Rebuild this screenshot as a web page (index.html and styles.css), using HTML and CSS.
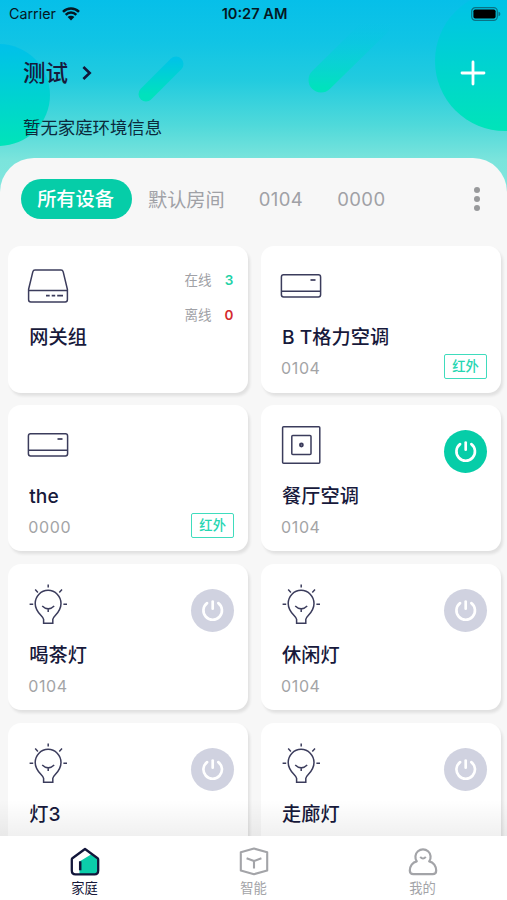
FILE: index.html
```
<!DOCTYPE html>
<html lang="zh-CN">
<head>
  <meta charset="UTF-8" />
  <meta name="viewport" content="width=device-width, initial-scale=1.0">
  <title>家庭</title>
  <link rel="stylesheet" href="styles.css">
</head>
<body>

<!-- icons -->
<svg class="sprite" width="0" height="0">
  <symbol id="i-gateway" viewBox="0 0 42 42">
    <path d="M1.6 23.3 L5.8 5.9 Q6.3 4.1 8 4.1 H34 Q35.7 4.1 36.2 5.9 L40.4 23.3 V33.8 Q40.4 36 38.2 36 H3.8 Q1.6 36 1.6 33.8 Z M1.6 24.4 H40.4" />
    <path d="M19 29.6 H22.7 M24.7 29.6 H28.2 M30.2 29.6 H36" stroke-width="1.7" />
  </symbol>
  <symbol id="i-ac" viewBox="0 0 42 42">
    <rect x="1.4" y="8.8" width="39.2" height="22.2" rx="2.2" />
    <path d="M1.6 25.2 H40.4" />
    <path d="M30.5 14 H35.5" stroke-width="1.7" />
  </symbol>
  <symbol id="i-panel" viewBox="0 0 42 42">
    <rect x="2.6" y="1.8" width="37.2" height="36.4" rx="1" />
    <rect x="11.8" y="10.6" width="19.2" height="19" rx="1" />
    <circle cx="21.4" cy="20" r="1.4" stroke-width="2" />
  </symbol>
  <symbol id="i-bulb" viewBox="0 0 42 42">
    <path d="M16.6 39.2 V35.3 C16 31.8 8.2 28.6 8.2 19.5 A12.9 13.2 0 0 1 34 19.5 C34 28.6 26.4 31.8 25.8 35.3 V39.2 Z" />
    <path d="M15.2 22 Q21.2 27.8 27.2 22 M21.2 25 V28" />
    <path d="M21.2 0.6 V3.6 M8.2 5.6 L10.9 8.4 M35 5.6 L32.3 8.4 M2.6 20.3 H6.2 M36.4 20.3 H40" />
  </symbol>
  <symbol id="i-power" viewBox="0 0 44 44">
    <path d="M16.3 14.3 A9.4 9.4 0 1 0 27.7 14.3" />
    <path d="M22 12.7 V20" />
  </symbol>
</svg>

<div class="screen">
  <div class="hero">
    <svg class="hero-bg" viewBox="0 0 507 215" preserveAspectRatio="none">
      <defs>
        <linearGradient id="g1" x1="0" y1="0" x2="0" y2="1">
          <stop offset="0" stop-color="#00c0ea" />
          <stop offset="1" stop-color="#00e4b9" />
        </linearGradient>
        <linearGradient id="g2" gradientUnits="userSpaceOnUse" x1="0" y1="60" x2="0" y2="95">
          <stop offset="0" stop-color="#00c4e6" />
          <stop offset="1" stop-color="#00e2bd" />
        </linearGradient>
        <linearGradient id="g3" gradientUnits="userSpaceOnUse" x1="0" y1="20" x2="0" y2="88">
          <stop offset="0" stop-color="#00c4e6" stop-opacity="0" />
          <stop offset="1" stop-color="#00e2bd" />
        </linearGradient>
      </defs>
      <circle cx="-1" cy="95" r="51" fill="url(#g1)" />
      <circle cx="505" cy="61" r="70" fill="url(#g1)" />
      <path d="M146 94 L176 64" stroke="url(#g2)" stroke-width="15" stroke-linecap="round" />
      <path d="M321 80 L378 24" stroke="url(#g3)" stroke-width="25" stroke-linecap="round" />
    </svg>

    <div class="statusbar">
      <div class="carrier">
        <span>Carrier</span>
        <svg width="18" height="14" viewBox="0 0 18 14">
          <path d="M1 4.9 A11.4 11.4 0 0 1 17 4.9 M3.7 7.8 A7.4 7.4 0 0 1 14.3 7.8" fill="none" stroke="#051722" stroke-width="2.5" />
          <path d="M9 13.6 L5.6 10.1 A4.8 4.8 0 0 1 12.4 10.1 Z" fill="#051722" />
        </svg>
      </div>
      <div class="clock">10:27 AM</div>
      <div class="battery">
        <svg width="30" height="14" viewBox="0 0 30 14">
          <rect x="0.7" y="0.7" width="25.6" height="12.6" rx="3.6" fill="none" stroke="#0a7285" stroke-width="1.2" />
          <rect x="2.4" y="2.4" width="22.2" height="9.2" rx="1.8" fill="#000" />
          <path d="M27.5 4.7 Q29.4 5.3 29.4 7 Q29.4 8.7 27.5 9.3 Z" fill="#0a7285" />
        </svg>
      </div>
    </div>

    <div class="home-row">
      <div class="home-name">测试
        <svg width="12" height="16" viewBox="0 0 12 16"><path d="M2.4 2 L8.7 8 L2.4 14" /></svg>
      </div>
      <svg class="add" width="26" height="26" viewBox="0 0 26 26"><path d="M13 2 V24 M2 13 H24" stroke-linecap="round" /></svg>
    </div>
    <div class="env">暂无家庭环境信息</div>
  </div>

  <div class="sheet">
    <div class="rooms">
      <span class="room active">所有设备</span>
      <span class="room">默认房间</span>
      <span class="room num">0104</span>
      <span class="room num">0000</span>
      <div class="more"><i></i><i></i><i></i></div>
    </div>

    <div class="devices">
      <div class="card">
        <div class="info">
          <svg class="icon"><use href="#i-gateway" /></svg>
          <div class="name">网关组</div>
        </div>
        <div class="counts">
          <div>在线<b class="online">3</b></div>
          <div>离线<b class="offline">0</b></div>
        </div>
      </div>

      <div class="card">
        <div class="info">
          <svg class="icon"><use href="#i-ac" /></svg>
          <div class="name">B T格力空调</div>
          <div class="place">0104</div>
        </div>
        <span class="tag">红外</span>
      </div>

      <div class="card">
        <div class="info">
          <svg class="icon"><use href="#i-ac" /></svg>
          <div class="name">the</div>
          <div class="place">0000</div>
        </div>
        <span class="tag">红外</span>
      </div>

      <div class="card">
        <div class="info">
          <svg class="icon"><use href="#i-panel" /></svg>
          <div class="name">餐厅空调</div>
          <div class="place">0104</div>
        </div>
        <svg class="power on"><use href="#i-power" /></svg>
      </div>

      <div class="card">
        <div class="info">
          <svg class="icon"><use href="#i-bulb" /></svg>
          <div class="name">喝茶灯</div>
          <div class="place">0104</div>
        </div>
        <svg class="power"><use href="#i-power" /></svg>
      </div>

      <div class="card">
        <div class="info">
          <svg class="icon"><use href="#i-bulb" /></svg>
          <div class="name">休闲灯</div>
          <div class="place">0104</div>
        </div>
        <svg class="power"><use href="#i-power" /></svg>
      </div>

      <div class="card">
        <div class="info">
          <svg class="icon"><use href="#i-bulb" /></svg>
          <div class="name">灯3</div>
        </div>
        <svg class="power"><use href="#i-power" /></svg>
      </div>

      <div class="card">
        <div class="info">
          <svg class="icon"><use href="#i-bulb" /></svg>
          <div class="name">走廊灯</div>
        </div>
        <svg class="power"><use href="#i-power" /></svg>
      </div>
    </div>
  </div>

  <div class="tabbar">
    <div class="tab active">
      <svg width="32" height="32" viewBox="0 0 32 32">
        <path d="M10.5 27.5 V15.5 L22 8.5 L28.5 13 V24 Q28.5 28 25 28 H10.5 Z" fill="#0bcdaa" />
        <path d="M16 3 L28.6 12.2 Q29.2 12.7 29.2 13.5 V24.4 Q29.2 28.3 25.5 28.3 H6.5 Q2.8 28.3 2.8 24.4 V13.5 Q2.8 12.7 3.4 12.2 Z" fill="none" stroke="#12163a" stroke-width="2.3" stroke-linejoin="round" />
        <path d="M11.2 15.3 V24.3" stroke="#12163a" stroke-width="2.5" />
      </svg>
      <span>家庭</span>
    </div>
    <div class="tab">
      <svg width="32" height="32" viewBox="0 0 32 32" fill="none" stroke="#a3a4a8" stroke-width="2.1" stroke-linejoin="round">
        <path d="M16 2.6 L29.2 6.2 V24.6 L16 28.2 L2.8 24.6 V6.2 Z" />
        <path d="M8.6 12.3 L16 15 L23.4 12.3 M16 15 V22.4" />
      </svg>
      <span>智能</span>
    </div>
    <div class="tab">
      <svg width="32" height="32" viewBox="0 0 32 32" fill="none" stroke="#a3a4a8" stroke-width="2.2" stroke-linejoin="round">
        <path d="M9.8 15.3 A7.6 7.6 0 1 1 22.2 15.3 C26.5 16.2 29.2 20.4 29.2 24.6 Q29.2 28.2 25.7 28.2 H6.3 Q2.8 28.2 2.8 24.6 C2.8 20.4 5.5 16.2 9.8 15.3 Z" />
        <path d="M13.2 10.8 Q16 14.2 18.8 10.8" stroke-width="2" />
      </svg>
      <span>我的</span>
    </div>
  </div>
</div>

</body>
</html>
```
FILE: styles.css
```
* {
  box-sizing: border-box;
}
body {
  margin: 0;
  font-family: Inter, "Noto Sans CJK SC", sans-serif;
  color: #17193b;
}
.sprite {
  display: block;
  position: absolute;
}
.screen {
  height: 900px;
  display: flex;
  flex-direction: column;
  overflow: hidden;
  background: linear-gradient(#06bfe9 0, #10c4e5 40px, #22cbdf 80px, #4fd9da 125px, #7be4dc 160px, #86e7e0 215px);
}

/* header */
.hero {
  position: relative;
  height: 158px;
  flex: none;
}
.hero-bg {
  position: absolute;
  top: 0;
  left: 0;
  width: 100%;
  height: 215px;
  fill: none;
}
.statusbar,
.home-row,
.env {
  position: relative;
}
.statusbar {
  height: 27px;
  display: grid;
  grid-template-columns: 1fr auto 1fr;
  align-items: center;
  padding: 0 6px 0 9px;
  color: #051722;
}
.carrier {
  display: flex;
  align-items: center;
  gap: 6px;
  font-size: 14.3px;
}
.clock {
  margin-right: 1px;
  font-weight: 600;
  font-size: 14.6px;
}
.battery {
  display: flex;
  justify-content: flex-end;
}
.home-row {
  display: flex;
  justify-content: space-between;
  align-items: center;
  height: 34px;
  margin-top: 29px;
  padding: 0 21px 0 23px;
}
.home-name {
  display: flex;
  align-items: center;
  gap: 13px;
  font-size: 22.5px;
  font-weight: 500;
  line-height: 34px;
}
.home-name svg {
  fill: none;
  stroke: #12163a;
  stroke-width: 2.6;
}
.add {
  fill: none;
  stroke: #fff;
  stroke-width: 2.8;
}
.env {
  margin: 25px 0 0 23px;
  font-size: 17.4px;
  line-height: 26px;
  color: #0b2a3c;
}

/* device list */
.sheet {
  position: relative;
  flex: 1;
  min-height: 0;
  overflow: hidden;
  background: #f7f7f7;
  border-radius: 34px 34px 0 0;
}
.sheet::after {
  content: "";
  position: absolute;
  left: 0;
  right: 0;
  bottom: 0;
  height: 36px;
  background: linear-gradient(rgba(0, 0, 0, 0), rgba(0, 0, 0, 0.06));
}
.rooms {
  display: flex;
  align-items: center;
  height: 40px;
  margin-top: 21px;
  padding: 0 27px 0 21px;
  font-size: 19.2px;
  color: #a0a1a6;
}
.room.active {
  width: 111px;
  line-height: 41px;
  height: 40px;
  margin-right: 16px;
  padding-right: 2px;
  text-align: center;
  border-radius: 20px;
  background: #06cda8;
  color: #fff;
  font-weight: 500;
}
.room.num {
  margin-left: 34px;
  font-size: 18.5px;
  letter-spacing: 0.4px;
}
.more {
  margin-left: auto;
  display: flex;
  flex-direction: column;
  gap: 3.4px;
}
.more i {
  width: 6px;
  height: 6px;
  border-radius: 50%;
  background: #98999b;
}
.devices {
  display: grid;
  grid-template-columns: 240px 240px;
  grid-auto-rows: 146.4px;
  gap: 12.4px 12.8px;
  margin-top: 27.2px;
  padding-left: 7.8px;
}
.card {
  display: flex;
  justify-content: space-between;
  padding: 20px 13.4px 13.6px 19px;
  border-radius: 13px;
  background: #fff;
  box-shadow: 2px 3px 3px rgba(0, 0, 0, 0.09);
}
.icon {
  display: block;
  width: 42px;
  height: 42px;
  fill: none;
  stroke: #3b3c5c;
  stroke-width: 1.5;
}
.name {
  margin: 14px 0 0 2.5px;
  font-size: 19.2px;
  font-weight: 500;
  line-height: 30px;
  white-space: nowrap;
}
.place {
  margin: 3px 0 0 1.5px;
  font-size: 16px;
  line-height: 26px;
  letter-spacing: 0.6px;
  color: #a3a4a6;
}
.tag {
  align-self: flex-end;
  width: 43.5px;
  height: 25px;
  border: 1.5px solid #3fdcbd;
  border-radius: 2px;
  text-align: center;
  font-size: 13.3px;
  font-weight: 500;
  line-height: 23.5px;
  color: #27d6b2;
}
.counts {
  margin-top: 4px;
  font-size: 13.5px;
  line-height: 20px;
  color: #a0a1a6;
}
.counts div {
  display: flex;
  justify-content: space-between;
  width: 49px;
  margin: 0 1px 15px 0;
}
.counts b {
  font-weight: 600;
}
.online {
  color: #1ed2a6;
}
.offline {
  color: #d42a2f;
}
.power {
  width: 43.4px;
  height: 43.4px;
  margin-top: 5px;
  border-radius: 50%;
  background: #d0d2e0;
  fill: none;
  stroke: #fff;
  stroke-width: 2.7;
  stroke-linecap: round;
}
.power.on {
  background: #06cda8;
}

/* bottom bar */
.tabbar {
  flex: none;
  height: 64px;
  display: grid;
  grid-template-columns: repeat(3, 1fr);
  background: #fff;
}
.tab {
  display: flex;
  flex-direction: column;
  align-items: center;
  padding-top: 10px;
  font-size: 13.3px;
  line-height: 20px;
  color: #a3a4a8;
}
.tab.active {
  color: #17193b;
}
```
